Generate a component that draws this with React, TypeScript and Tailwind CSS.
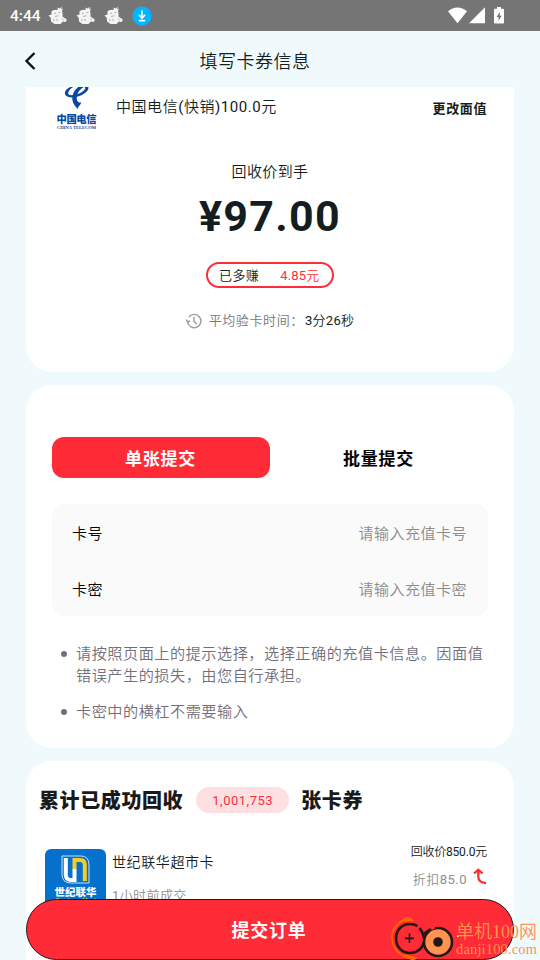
import React from "react";

function Critter() {
  return (
    <svg width="20" height="20" viewBox="0 0 20 20" fill="#f4f4f4">
      <path d="M3.4 5.6 L5.5 4 L10 3.8 L9.2 1.4 L11.4 2.6 L14 0.8 L13 3.2 L15 2.4 L14 5 L14.6 8 L14.4 10.5 L18.8 13.4 L17.8 16 L14.8 15.6 L12.6 18 L6.5 18 L3.2 15.8 L2.6 11.5 L0.4 9.4 L3.6 8.6 Z" />
      <path d="M6 7.6 L8 6.8 M10.4 6.6 L12.4 6.6 M7 10.4 L10.4 9.8 M5.4 13 L6.4 15 M8.6 13 L9.6 15 M14.4 12.6 L15.6 14" stroke="#8c8c8c" strokeWidth="0.7" fill="none" />
    </svg>
  );
}

function StatusBar() {
  return (
    <div className="flex h-[31px] shrink-0 items-center bg-[#757575] pl-[10px] text-white">
      <span className="w-[38px] pt-[1px] text-[15.5px] font-medium leading-[31px] whitespace-nowrap">4:44</span>
      <div className="flex gap-[8px]">
        <Critter />
        <Critter />
        <Critter />
      </div>
      <svg className="ml-[8px]" width="20" height="20" viewBox="0 0 20 20">
        <circle cx="10" cy="10" r="9.6" fill="#00b7ff" />
        <path d="M10 4.5 V11.6 M6.9 8.9 L10 12 L13.1 8.9 M6.8 14.6 H13.2" stroke="#fff" strokeWidth="1.6" fill="none" />
      </svg>
      <div className="ml-auto flex items-center pr-[36px] pb-[1px]">
        <svg width="19" height="17" viewBox="0 0 19 17" fill="#fff">
          <path d="M0 4.2 C5.5 -0.9 13.5 -0.9 19 4.2 L9.5 16.3 Z" />
        </svg>
        <svg className="ml-[2px]" width="16" height="17" viewBox="0 0 16 17" fill="#fff">
          <path d="M16 0.2 V16.3 H0 Z" />
        </svg>
        <svg className="ml-[9px]" width="10" height="17" viewBox="0 0 10 17">
          <path d="M3 0 H7 V1.7 H9 Q10 1.7 10 2.7 V15.6 Q10 16.6 9 16.6 H1 Q0 16.6 0 15.6 V2.7 Q0 1.7 1 1.7 H3 Z" fill="#fff" />
          <path d="M5.8 5 L2.6 10 H4.6 V13.8 L7.6 8.7 H5.8 Z" fill="#757575" />
        </svg>
      </div>
    </div>
  );
}

function TelecomLogo() {
  return (
    <svg width="42" height="43" viewBox="0 0 42 43">
      <g fill="#0a4a9c">
        <path d="M18 -1 C11 0 7.5 5 9.4 8 C11.5 11.4 20 11 26 8 C31.5 5 34 1 31.5 -1 H25 C28 -0.4 30 0.4 29 2 C27.4 5 21 8 16 8.2 C12.4 8.4 11.6 7 12.6 4.6 C13.6 2.4 15.6 0.8 18 -0.4 Z" />
        <path d="M23.5 -1 C18 3 15.6 8 16.4 13 C17 17 19.4 19.4 21.6 22 C22 19.4 24.6 18 25.4 15.2 C23 16.4 21 14.6 20.8 12 C20.4 8 22.4 3.4 27.6 0 Z" />
      </g>
      <text x="0.5" y="35.8" fontSize="10.3" fontWeight="900" fill="#0a4a9c" textLength="40" fontFamily="Noto Sans CJK SC, sans-serif">中国电信</text>
      <text x="1" y="42.2" fontSize="4.6" fontWeight="700" fill="#0a4a9c" textLength="39" lengthAdjust="spacingAndGlyphs" fontFamily="Liberation Serif, serif">CHINA TELECOM</text>
    </svg>
  );
}

function PriceCard() {
  return (
    <section className="flex h-[285px] shrink-0 flex-col items-center rounded-b-[26px] bg-white">
      <div className="flex h-[43px] w-full pl-[30px] pr-[27px]">
        <TelecomLogo />
        <span className="ml-[18px] h-[40px] text-[15px] leading-[40px] tracking-[0.55px]">中国电信<span className="font-normal">(</span>快销<span className="font-normal">)100.0</span>元</span>
        <span className="ml-auto text-[13px] font-bold leading-[43px] tracking-[0.6px]">更改面值</span>
      </div>
      <div className="mt-[30px] h-[24px] text-[15px] leading-[24px] tracking-[0.4px]">回收价到手</div>
      <div className="mt-[8px] h-[48px] text-[43px] font-bold leading-[48px] tracking-[1.3px]">¥97.00</div>
      <div className="mt-[22px] flex h-[26px] w-[128px] items-center rounded-full border-2 border-[#ff2c37] pl-[11px] text-[13px] leading-[22px] tracking-[0.4px]">
        <span className="pt-[1px]">已多赚</span>
        <span className="ml-[21px] pt-[1px] tracking-[0.2px] text-[#ff2c37]"><span className="font-normal">4.85</span>元</span>
      </div>
      <div className="mt-[21px] flex h-[24px] items-center text-[13px] leading-[24px] tracking-[0.5px]">
        <svg className="mr-[7px]" width="16" height="16" viewBox="0 0 16 16" fill="none" stroke="#9b9aa3" strokeWidth="1.4">
          <path d="M1.6 9.2 A6.7 6.7 0 1 0 2.9 4 M0.4 6.6 L1.6 9.4 L4 7.6 M8 3.8 V8.3 L10.6 11.2" />
        </svg>
        <span className="mr-[1px] tracking-[0.6px] text-[#76757e]">平均验卡时间：</span>
        <span className="tracking-[0.3px]"><span className="font-normal">3</span>分<span className="font-normal">26</span>秒</span>
      </div>
    </section>
  );
}

function Field({ label, hint }: { label: string; hint: string }) {
  return (
    <div className="flex h-[56px] items-center justify-between pl-[20px] pr-[21px] text-[15px] leading-[56px] tracking-[0.5px]">
      <span className="text-black">{label}</span>
      <span className="text-[#8b8b8b]">{hint}</span>
    </div>
  );
}

function SubmitCard() {
  return (
    <section className="mt-[13px] h-[363px] shrink-0 rounded-[26px] bg-white px-[26px] pt-[52px]">
      <div className="flex h-[41px] text-center text-[17px] font-bold leading-[44px] tracking-[0.7px]">
        <div className="h-[41px] w-1/2 rounded-[12px] bg-[#ff2c37] pr-[1px] text-white">单张提交</div>
        <div className="w-1/2 pr-[1px] text-black">批量提交</div>
      </div>
      <div className="mt-[26px] h-[112px] rounded-[12px] bg-[#fafafa] pt-[2px]">
        <Field label="卡号" hint="请输入充值卡号" />
        <Field label="卡密" hint="请输入充值卡密" />
      </div>
      <ul className="mt-[26px] pl-[9px] text-[15.2px] leading-[22px] tracking-[0.48px] text-[#71707a]">
        <li className="flex">
          <span className="mt-[9px] mr-[9px] size-[6px] shrink-0 rounded-full bg-[#71707a]" />
          <span className="pt-[1px] whitespace-nowrap">
            请按照页面上的提示选择，选择正确的充值卡信息。因面值<br />
            错误产生的损失，由您自行承担。
          </span>
        </li>
        <li className="mt-[13px] flex">
          <span className="mt-[9px] mr-[9px] size-[6px] shrink-0 rounded-full bg-[#71707a]" />
          <span className="pt-[1px]">卡密中的横杠不需要输入</span>
        </li>
      </ul>
    </section>
  );
}

function LianhuaLogo() {
  return (
    <svg width="61" height="61" viewBox="0 0 61 61">
      <rect width="61" height="61" rx="6" fill="#0671cd" />
      <path d="M17 7 H36 Q44 7 44 16 V34 H26 Q17 34 17 25 Z" fill="none" stroke="#c8dff0" strokeWidth="1" />
      <path d="M20.8 9 V26 Q21 31 26 31 H29.5 V20" fill="none" stroke="#fff" strokeWidth="4" />
      <path d="M29.5 20 V11 H35 Q39.8 11 39.8 16 V32" fill="none" stroke="#f5cd25" strokeWidth="4" />
      <text x="9.5" y="46.8" fontSize="10.4" fontWeight="900" fill="#fff" textLength="42" fontFamily="Noto Sans CJK SC, sans-serif">世纪联华</text>
      <text x="10" y="54.2" fontSize="6.4" fontWeight="700" fill="#b7cf50" textLength="41" lengthAdjust="spacingAndGlyphs" fontFamily="Liberation Sans, sans-serif">Century Mart</text>
    </svg>
  );
}

function RecordsCard() {
  return (
    <section className="mt-[13px] h-[199px] shrink-0 rounded-t-[26px] bg-white">
      <div className="flex items-center pt-[26px] pl-[13px] text-[20px] font-black leading-[26px] tracking-[0.6px] text-[#1a1a1a]">
        <span className="-mb-[2px]">累计已成功回收</span>
        <span className="ml-[13px] h-[26px] w-[93px] rounded-full bg-[#ffe0e2] text-center text-[13px] font-normal leading-[27px] tracking-[0.5px] text-[#ff2c37]">1,001,753</span>
        <span className="-mb-[2px] ml-[12px]">张卡券</span>
      </div>
      <div className="mt-[36px] flex pl-[19px] pr-[27px]">
        <LianhuaLogo />
        <div className="ml-[6px] flex flex-col">
          <span className="h-[26px] text-[14px] leading-[26px] tracking-[0.6px]">世纪联华超市卡</span>
          <span className="mt-[8px] text-[13px] leading-[26px] tracking-[0.4px] text-[#8f8f8f]"><span className="font-normal">1</span>小时前成交</span>
        </div>
        <div className="ml-auto flex flex-col items-end">
          <span className="-mt-[7px] h-[20px] text-[12px] leading-[20px] tracking-[-0.2px]">回收价<span className="font-normal">850.0</span>元</span>
          <div className="mt-[6px] flex">
            <span className="text-[13px] leading-[24px] tracking-[0.5px] text-[#8f8f8f]">折扣<span className="font-normal">85.0</span></span>
            <svg className="ml-[6px]" width="14" height="17" viewBox="0 0 14 17" fill="none" stroke="#ff2c37" strokeWidth="2.3">
              <path d="M1 5.5 L5.3 1.7 L9.6 5.5 M5.3 2 V9 Q5.5 14.6 13 15" />
            </svg>
          </div>
        </div>
      </div>
    </section>
  );
}

function Watermark() {
  return (
    <div className="absolute bottom-0 right-0 h-[44px] w-[150px]">
      <svg width="150" height="44" viewBox="390 916 150 44">
        <g fill="none" strokeLinecap="round">
          <path d="M411 919 C399 920 392 928 392 938 C392 949 400 957 413 959" stroke="#ff6500" strokeWidth="1.6" />
          <path d="M401 921 C406 917 409 917 412 920 Z M404 955 L416 958 L413 960 Z" fill="#ff6500" stroke="#ff6500" strokeWidth="1.6" />
          <path d="M417.5 926 C415 924.4 412.5 924 410 924 C402 924 396 930 396 938 C396 947 402 953 410 953 C417 953 423 948 424 942 M419.5 928 C422 931 423.6 934 424 938" stroke="#231815" strokeWidth="2.6" strokeLinecap="butt" />
          <path d="M409.5 933.5 V943 M405 938.3 H414" stroke="#231815" strokeWidth="1.7" strokeLinecap="butt" />
          <circle cx="438" cy="942" r="14" fill="#ff934f" stroke="#231815" strokeWidth="2.6" />
          <path d="M425 933 L430 929.5" stroke="#231815" strokeWidth="2.4" />
          <path d="M431 929 L434.6 927" stroke="#ff2c37" strokeWidth="2.6" strokeLinecap="butt" />
          <circle cx="438" cy="942" r="4.8" fill="#231815" />
        </g>
        <rect x="457" y="935" width="1.5" height="2" fill="#fff" />
        <text x="456" y="937.5" fontSize="18" fontWeight="350" fill="#ff9350" textLength="81" lengthAdjust="spacingAndGlyphs" fontFamily="Liberation Serif, Noto Sans CJK SC, serif">单机100网</text>
        <text x="456" y="953.5" fontSize="14.5" fill="#ff9350" textLength="81" lengthAdjust="spacing" fontFamily="Liberation Serif, serif">danji100.com</text>
      </svg>
    </div>
  );
}

export default function App() {
  return (
    <div className="relative flex h-[960px] w-[540px] flex-col overflow-hidden bg-[#f0fafd] font-[Roboto,'Noto_Sans_CJK_SC',sans-serif] font-[350] text-[#141d20]">
      <StatusBar />
      <header className="flex h-[56px] shrink-0 items-center pl-[24px] pr-[24px]">
        <svg className="mt-[4px]" width="12" height="18" viewBox="0 0 12 18" fill="none" stroke="#111" strokeWidth="2.4">
          <path d="M10.5 1 L2.5 9 L10.5 17" />
        </svg>
        <h1 className="mt-[6px] grow pr-[42px] text-center text-[18px] leading-[28px] tracking-[0.5px]">填写卡券信息</h1>
      </header>
      <main className="flex grow flex-col px-[26px]">
        <PriceCard />
        <SubmitCard />
        <RecordsCard />
      </main>
      <button className="absolute bottom-0 left-[26px] h-[61px] w-[488px] rounded-full border border-[#2b1518] bg-[#ff2c37] pr-[2px] text-[18px] font-bold leading-[61px] tracking-[0.7px] text-white">
        提交订单
      </button>
      <Watermark />
    </div>
  );
}
